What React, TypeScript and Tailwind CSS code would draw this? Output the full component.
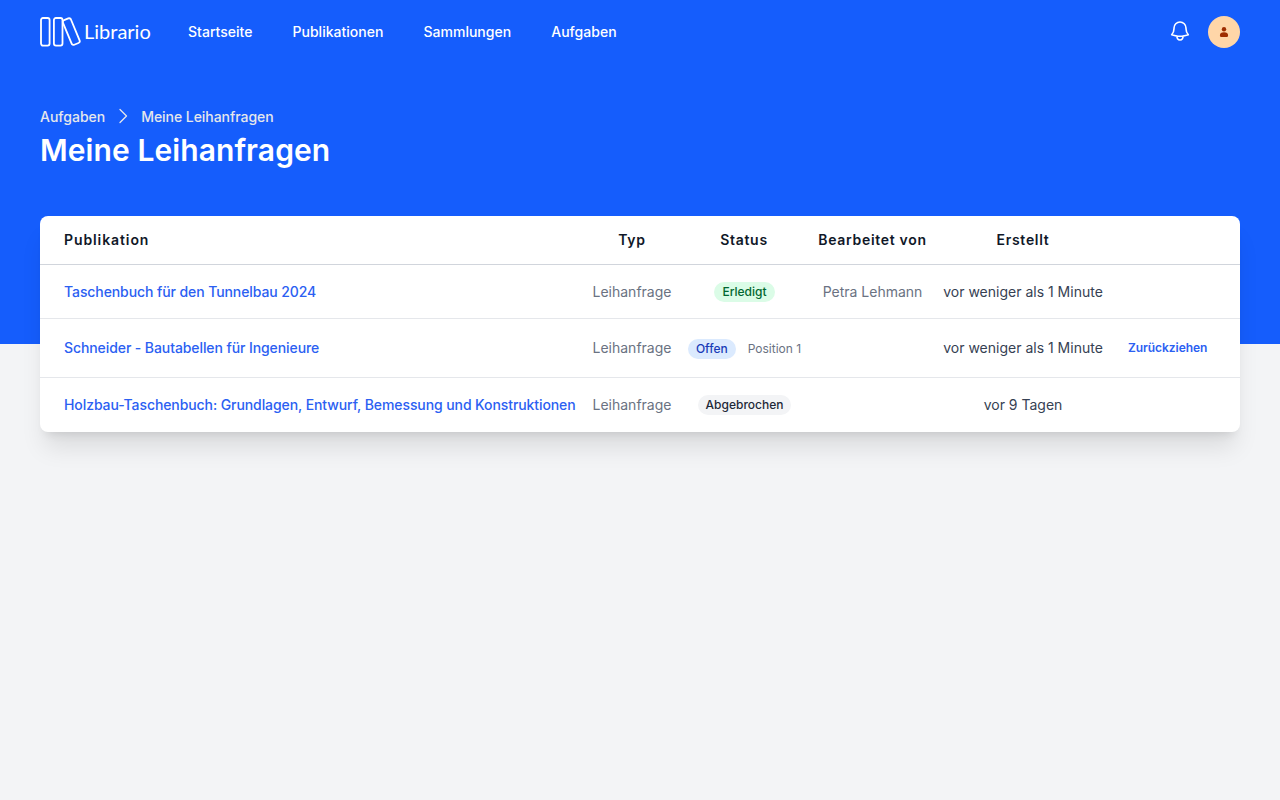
import clsx from 'clsx'

type Status = 'done' | 'open' | 'cancelled'

interface LoanRequest {
  title: string
  status: Status
  position?: number
  processedBy?: string
  createdAt: string
}

const navItems = ['Startseite', 'Publikationen', 'Sammlungen', 'Aufgaben']

const requests: LoanRequest[] = [
  {
    title: 'Taschenbuch für den Tunnelbau 2024',
    status: 'done',
    processedBy: 'Petra Lehmann',
    createdAt: 'vor weniger als 1 Minute',
  },
  {
    title: 'Schneider - Bautabellen für Ingenieure',
    status: 'open',
    position: 1,
    createdAt: 'vor weniger als 1 Minute',
  },
  {
    title: 'Holzbau-Taschenbuch: Grundlagen, Entwurf, Bemessung und Konstruktionen',
    status: 'cancelled',
    createdAt: 'vor 9 Tagen',
  },
]

const statusLabels: Record<Status, string> = {
  done: 'Erledigt',
  open: 'Offen',
  cancelled: 'Abgebrochen',
}

const statusStyles: Record<Status, string> = {
  done: 'bg-green-100 text-green-800',
  open: 'bg-blue-100 text-blue-800',
  cancelled: 'bg-gray-100 text-gray-800',
}

function Logo() {
  return (
    <a href="#" className="flex h-8 w-[112px] shrink-0 items-center">
      <svg className="shrink-0" width="41" height="32" viewBox="0 0 41 32" fill="none" stroke="currentColor" strokeWidth="1.8">
        <rect x="1" y="2" width="8.6" height="27.6" rx="2" />
        <rect x="13.9" y="2" width="8.6" height="27.6" rx="2" />
        <rect x="-4.3" y="-13.3" width="8.6" height="26.6" rx="2" transform="translate(31.3 15.6) rotate(-22.5)" />
      </svg>
      <span className="-mt-[3px] ml-[3px] font-[Lato,sans-serif] text-[20px] leading-8">Librario</span>
    </a>
  )
}

function BellIcon() {
  return (
    <svg className="size-6" viewBox="0 0 24 24" fill="none" stroke="currentColor" strokeWidth="1.6" strokeLinecap="round" strokeLinejoin="round">
      <path d="M14.857 17.082a23.848 23.848 0 0 0 5.454-1.31A8.967 8.967 0 0 1 18 9.75V9A6 6 0 0 0 6 9v.75a8.967 8.967 0 0 1-2.312 6.022c1.733.64 3.56 1.085 5.455 1.31m5.714 0a24.255 24.255 0 0 1-5.714 0m5.714 0a3 3 0 1 1-5.714 0" />
    </svg>
  )
}

function Avatar() {
  return (
    <div className="flex size-8 items-center justify-center rounded-full bg-[#ffd6a8] text-[#9f2d00]">
      <svg className="size-3" viewBox="0 0 12 12" fill="currentColor">
        <circle cx="6" cy="3.2" r="2.2" />
        <path d="M1.9 9.2C1.9 7.3 3.3 6.3 6 6.3s4.1 1 4.1 2.9c0 1.3-.7 1.8-1.7 1.8H3.6c-1 0-1.7-.5-1.7-1.8Z" />
      </svg>
    </div>
  )
}

function RequestRow({ request }: { request: LoanRequest }) {
  const isOpen = request.status === 'open'

  return (
    <tr className={clsx('*:border-b *:border-gray-200 last:*:border-transparent', isOpen ? 'h-[59px]' : 'h-[54px]')}>
      <td className="pl-6 text-left font-medium tracking-[-0.09px] text-[#2b60f2]">
        <a href="#">{request.title}</a>
      </td>
      <td className="text-gray-500">Leihanfrage</td>
      <td>
        <div className={clsx('flex items-center justify-center gap-3 pl-px text-xs', isOpen && 'pt-0.5')}>
          <span className={clsx('rounded-full px-2 py-0.5 font-medium', statusStyles[request.status])}>
            {statusLabels[request.status]}
          </span>
          {request.position && <span className="text-gray-500">Position {request.position}</span>}
        </div>
      </td>
      <td className="text-gray-500">{request.processedBy}</td>
      <td className="text-gray-700">{request.createdAt}</td>
      <td className="pl-[20px] text-left">
        {isOpen && (
          <button type="button" className="block text-xs font-semibold tracking-[-0.05px] text-[#2b60f2]">
            Zurückziehen
          </button>
        )}
      </td>
    </tr>
  )
}

export default function App() {
  return (
    <div className="min-h-screen bg-gray-100 font-[Inter,sans-serif] text-sm">
      <header className="h-[344px] bg-blue-600 px-10 text-white">
        <div className="flex h-16 items-center">
          <Logo />
          <nav className="ml-9 flex gap-10 font-medium tracking-[0.02px]">
            {navItems.map((item) => (
              <a key={item} href="#">
                {item}
              </a>
            ))}
          </nav>
          <div className="ml-auto flex items-center gap-4">
            <button type="button" aria-label="Benachrichtigungen" className="-mt-0.5">
              <BellIcon />
            </button>
            <Avatar />
          </div>
        </div>

        <div className="pt-[43px]">
          <div className="flex h-5 items-center font-medium text-gray-200">
            <a href="#">Aufgaben</a>
            <svg className="mx-2 size-5" viewBox="0 0 20 20" fill="none" stroke="currentColor" strokeWidth="1.3" strokeLinecap="round" strokeLinejoin="round">
              <path d="m7 2.5 6.5 6.5L7 15.5" />
            </svg>
            <a href="#" className="tracking-[-0.05px]">
              Meine Leihanfragen
            </a>
          </div>
          <h1 className="mt-1 text-[30px] leading-[38px] font-semibold tracking-[0.08px]">Meine Leihanfragen</h1>
        </div>
      </header>

      <main className="-mt-32 px-10">
        <div className="overflow-hidden rounded-lg bg-white shadow-xl">
          <table className="w-full table-fixed border-separate border-spacing-0 text-center whitespace-nowrap">
            <colgroup>
              <col className="w-[543px]" />
              <col className="w-[98px]" />
              <col className="w-[126px]" />
              <col className="w-[131px]" />
              <col className="w-[170px]" />
              <col />
            </colgroup>
            <thead>
              <tr className="h-[49px] tracking-wider text-gray-900 *:border-b *:border-gray-300">
                <th className="pl-6 text-left font-semibold tracking-[0.9px]">Publikation</th>
                <th className="font-semibold">Typ</th>
                <th className="font-semibold">Status</th>
                <th className="font-semibold">Bearbeitet von</th>
                <th className="font-semibold">Erstellt</th>
                <th />
              </tr>
            </thead>
            <tbody>
              {requests.map((request) => (
                <RequestRow key={request.title} request={request} />
              ))}
            </tbody>
          </table>
        </div>
      </main>
    </div>
  )
}
